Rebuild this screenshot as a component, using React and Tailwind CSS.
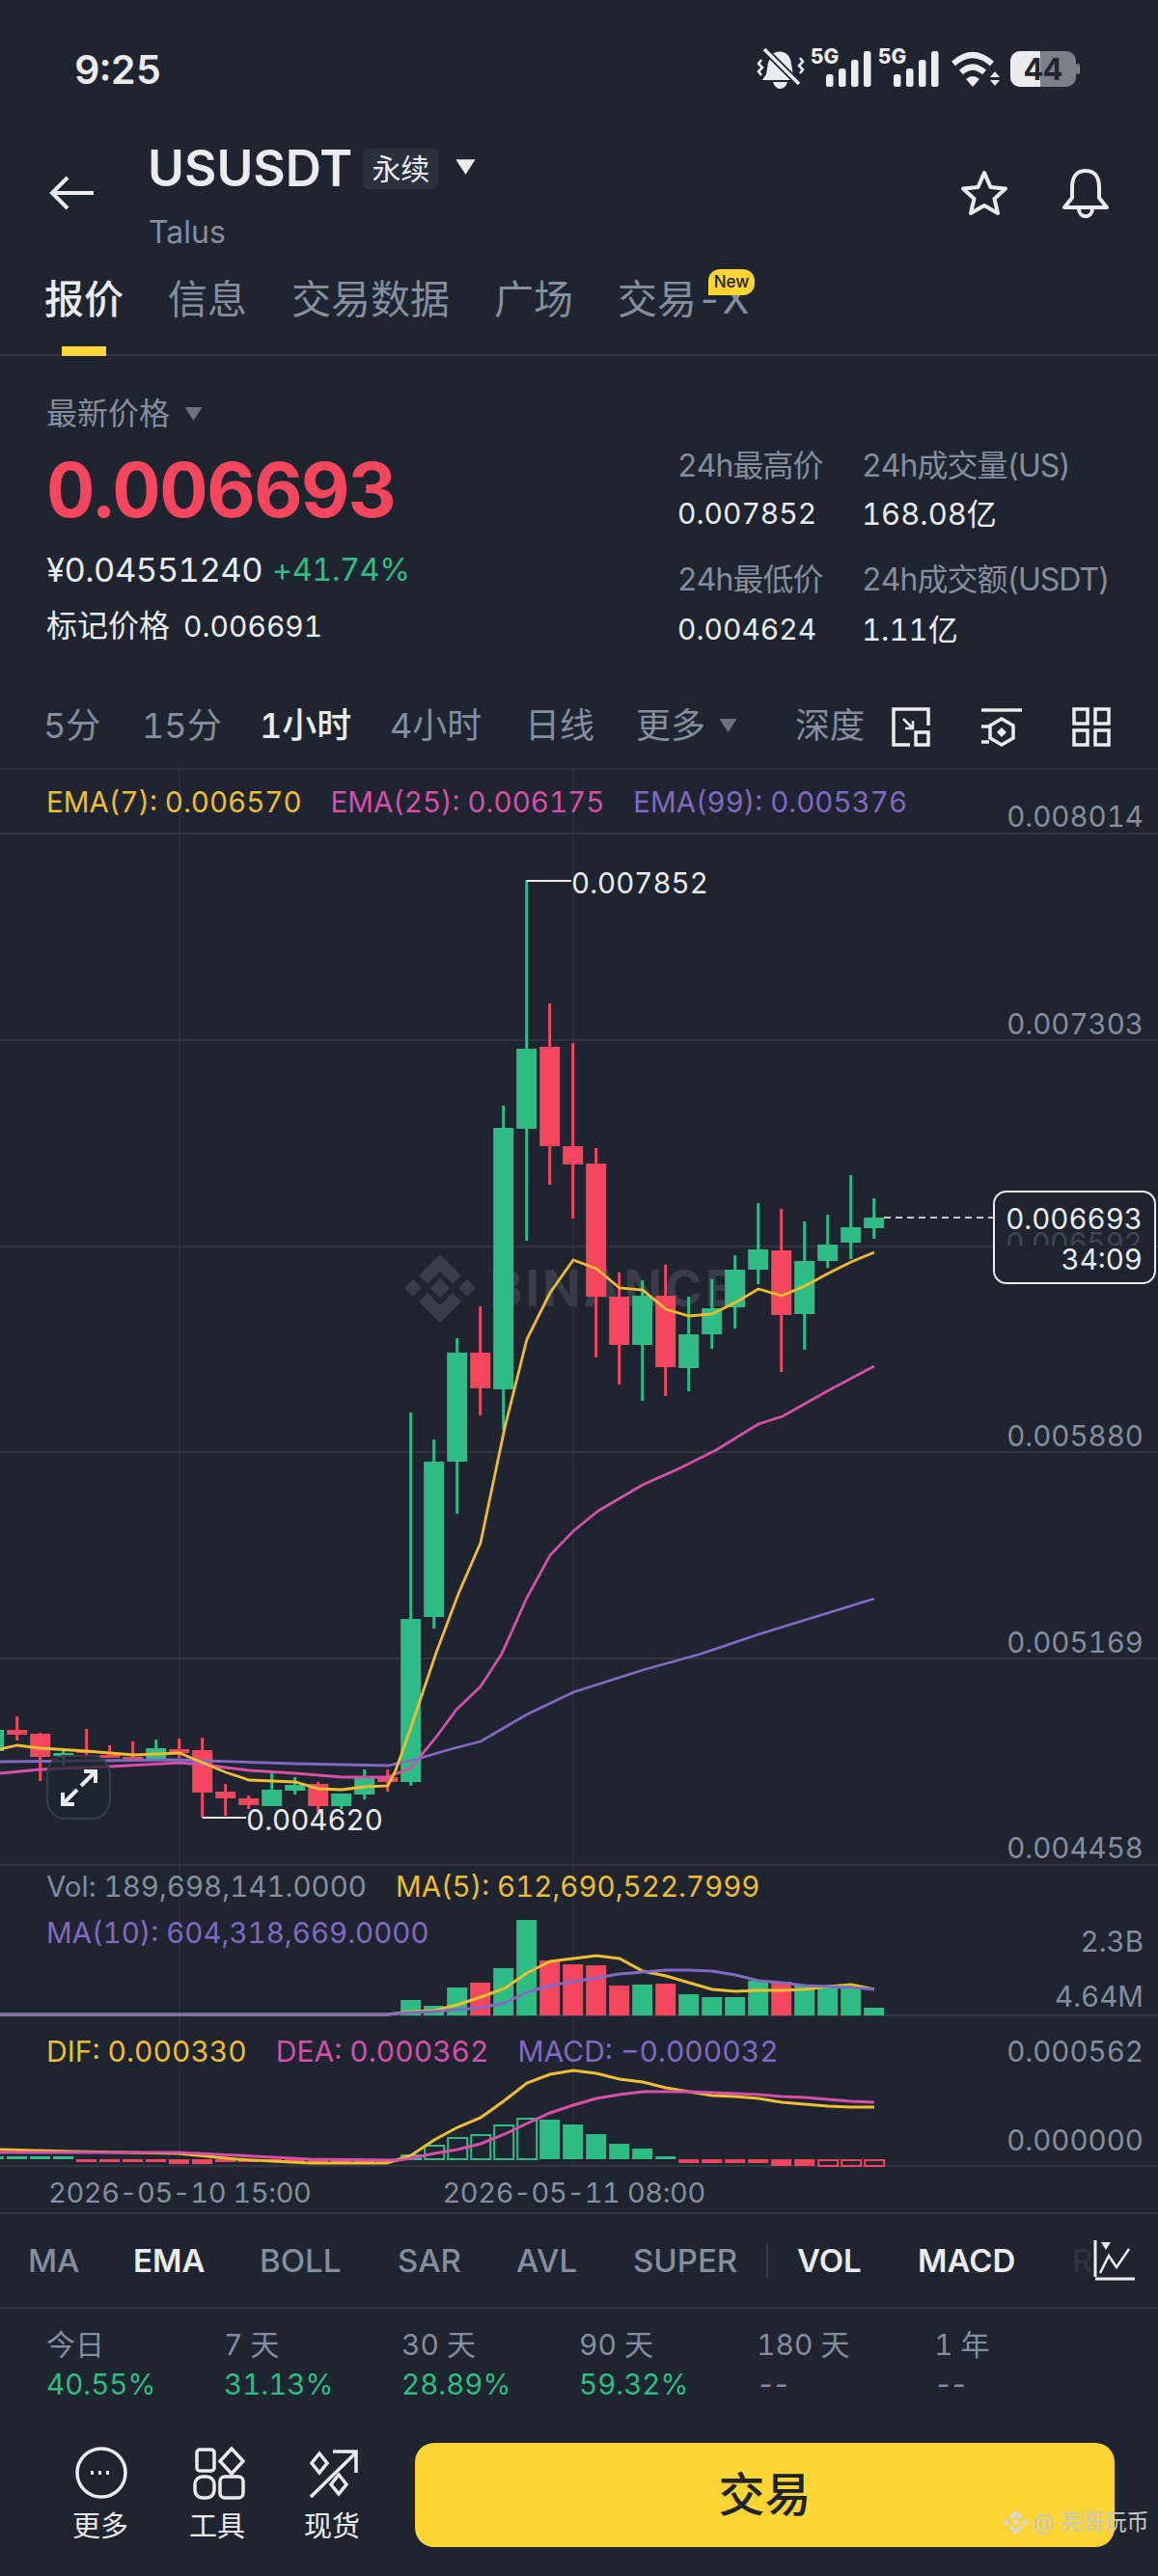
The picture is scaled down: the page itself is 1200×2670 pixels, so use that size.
import React from 'react';

const GREEN = '#2ebd85';
const RED = '#f6465d';
const YELLOW = '#f0bd2e';
const PINK = '#d64fa8';
const PURPLE = '#8269c2';

// x index, body top, body bottom, wick top, wick bottom, up?
const candles = [
  [0, 1793, 1815, 1790, 1815, 1],
  [1, 1793, 1798, 1779, 1804, 0],
  [2, 1797, 1821, 1796, 1846, 0],
  [3, 1817, 1820, 1815, 1830, 1],
  [4, 1815, 1817, 1792, 1822, 0],
  [5, 1819, 1822, 1809, 1822, 0],
  [6, 1821, 1823, 1805, 1823, 0],
  [7, 1812, 1823, 1803, 1823, 1],
  [8, 1813, 1817, 1802, 1822, 0],
  [9, 1814, 1858, 1801, 1884, 0],
  [10, 1857, 1864, 1849, 1882, 0],
  [11, 1864, 1871, 1861, 1875, 0],
  [12, 1855, 1872, 1838, 1872, 1],
  [13, 1850, 1856, 1842, 1860, 1],
  [14, 1849, 1872, 1847, 1878, 0],
  [15, 1859, 1872, 1859, 1875, 1],
  [16, 1843, 1860, 1834, 1865, 1],
  [17, 1842, 1847, 1834, 1857, 0],
  [18, 1678, 1847, 1464, 1851, 1],
  [19, 1515, 1676, 1492, 1688, 1],
  [20, 1402, 1515, 1387, 1569, 1],
  [21, 1402, 1439, 1354, 1467, 0],
  [22, 1169, 1440, 1146, 1482, 1],
  [23, 1087, 1170, 912, 1286, 1],
  [24, 1085, 1188, 1040, 1228, 0],
  [25, 1188, 1207, 1081, 1263, 0],
  [26, 1206, 1344, 1190, 1407, 0],
  [27, 1344, 1394, 1319, 1435, 0],
  [28, 1343, 1394, 1327, 1452, 1],
  [29, 1343, 1417, 1311, 1447, 0],
  [30, 1383, 1418, 1344, 1442, 1],
  [31, 1356, 1383, 1326, 1398, 1],
  [32, 1316, 1355, 1301, 1377, 1],
  [33, 1295, 1316, 1247, 1331, 1],
  [34, 1296, 1363, 1253, 1422, 0],
  [35, 1307, 1362, 1266, 1399, 1],
  [36, 1290, 1307, 1259, 1314, 1],
  [37, 1272, 1288, 1218, 1305, 1],
  [38, 1262, 1273, 1242, 1284, 1],
];

const ema7 = '0,1813 18,1809 42,1812 90,1815 138,1819 186,1817 210,1827 234,1837 258,1845 306,1847 330,1854 354,1855 378,1852 402,1851 410,1835 426,1790 452,1713 475,1652 498,1599 523,1480 546,1388 570,1340 594,1306 618,1315 642,1335 666,1337 690,1357 714,1364 738,1362 762,1350 786,1336 810,1343 834,1333 858,1320 882,1308 906,1298';
const ema25 = '0,1838 42,1834 114,1831 186,1827 210,1829 258,1835 306,1838 354,1842 402,1842 426,1832 450,1803 473,1772 498,1748 520,1714 546,1656 570,1612 594,1587 620,1566 666,1539 704,1522 742,1503 786,1476 811,1468 857,1442 906,1416';
const ema99 = '0,1826 186,1824 210,1825 306,1828 402,1830 433,1823 467,1813 498,1805 546,1777 594,1754 666,1731 727,1714 786,1694 906,1657';
const ma5 = '0,2088 401,2088 426,2085 450,2084 474,2078 498,2070 523,2061 546,2045 570,2033 594,2030 618,2027 642,2030 666,2043 690,2048 714,2055 738,2062 762,2064 786,2063 810,2063 834,2062 858,2059 882,2057 906,2062';
const ma10 = '0,2088 401,2088 426,2086 450,2085 474,2083 498,2081 523,2076 546,2065 570,2058 594,2054 618,2050 642,2046 666,2044 690,2042 714,2042 738,2043 762,2047 786,2053 810,2055 834,2058 858,2059 882,2060 906,2062';
const dif = '0,2228 76,2230 184,2232 245,2238 321,2242 401,2242 426,2234 450,2218 474,2205 498,2195 523,2177 546,2159 570,2150 594,2146 618,2149 642,2155 666,2158 690,2164 714,2168 738,2172 762,2173 786,2175 810,2179 834,2181 858,2183 882,2184 906,2184';
const dea = '0,2231 184,2231 245,2234 321,2238 413,2239 426,2237 450,2232 474,2228 498,2222 523,2212 546,2201 570,2190 594,2182 618,2175 642,2171 666,2168 690,2168 714,2168 738,2169 762,2170 786,2171 810,2173 834,2174 858,2176 882,2178 906,2179';

// volume bars from x=425.7: top y, up?
const volumes = [
  [2073, 1], [2079, 1], [2060, 1], [2055, 0], [2040, 1], [1990, 1], [2032, 0], [2036, 0], [2037, 0], [2058, 0], [2057, 1],
  [2056, 0], [2067, 1], [2070, 1], [2070, 1], [2053, 1], [2054, 0], [2058, 1], [2060, 1], [2060, 1], [2081, 1],
];

// macd bars from x=425.7: top, bottom, color, hollow
const macd = [
  [2233, 2238, GREEN, 1], [2223, 2238, GREEN, 1], [2215, 2238, GREEN, 1], [2212, 2238, GREEN, 1], [2202, 2238, GREEN, 1], [2195, 2238, GREEN, 1],
  [2197, 2238, GREEN, 0], [2202, 2238, GREEN, 0], [2212, 2238, GREEN, 0], [2222, 2238, GREEN, 0], [2227, 2238, GREEN, 0], [2235, 2238, GREEN, 0],
  [2238, 2242, RED, 0], [2238, 2242, RED, 0], [2238, 2242, RED, 0], [2238, 2242, RED, 0], [2238, 2245, RED, 0], [2238, 2245, RED, 0],
  [2238, 2245, RED, 1], [2238, 2245, RED, 1], [2238, 2245, RED, 1],
];

// small histogram left of the rally
const macdLeft = [
  [0, 2235, 2238, GREEN], [1, 2235, 2238, GREEN], [2, 2235, 2238, GREEN], [3, 2235, 2238, GREEN],
  [4, 2238, 2241, RED], [5, 2238, 2241, RED], [6, 2238, 2241, RED], [7, 2238, 2241, RED], [8, 2238, 2243, RED], [9, 2238, 2243, RED],
  [10, 2238, 2241, RED], [11, 2238, 2241, RED], [12, 2238, 2241, RED], [13, 2238, 2241, RED], [14, 2238, 2242, RED], [15, 2238, 2242, RED],
  [16, 2238, 2241, RED], [17, 2238, 2241, RED],
];

const axisLabels = [
  ['0.008014', 857], ['0.007303', 1072], ['0.005880', 1499], ['0.005169', 1713], ['0.004458', 1926],
  ['2.3B', 2023], ['4.64M', 2080], ['0.000562', 2137], ['0.000000', 2229],
];

const gridLines = [864, 1078, 1292, 1505, 1719];
const paneLines = [1933, 2089, 2245];

const returnsData = [
  ['今日', '40.55%'], ['7 天', '31.13%'], ['30 天', '28.89%'], ['90 天', '59.32%'], ['180 天', '--'], ['1 年', '--'],
];

function Triangle({ className }) {
  return (
    <svg viewBox="0 0 20 16" className={className}>
      <path d="M1 1 H19 L10 15 Z" fill="currentColor" />
    </svg>
  );
}

function StatusIcons() {
  const bars = [[0, 77], [13, 71], [26, 62], [39, 53]];
  return (
    <svg viewBox="780 45 345 50" className="w-[345px] h-[50px]">
      {/* muted bell */}
      <path d="M800 56 c11 -6 19 0 20 10 l2 12 5 5 h-37 l4 -6 2 -12 z" fill="#eaecef" />
      <path d="M801 85 h15 q-2 7 -7.5 7 t-7.5 -7 z" fill="#eaecef" />
      <path d="M792 51 L828 87" stroke="#1e2530" strokeWidth="7" />
      <path d="M792 51 L828 87" stroke="#eaecef" strokeWidth="3.5" />
      <path d="M789 62 l-3 4 4 4 -4 4 3 4 M829 60 l3 4 -4 4 4 4 -3 4" stroke="#eaecef" strokeWidth="2.5" fill="none" />
      {[840, 910].map((x, n) => (
        <g key={x}>
          <text x={x} y="66" fontSize="21" fontWeight="800" fill="#eaecef" fontFamily="Inter, sans-serif">5G</text>
          {bars.map(([dx, top]) => (
            <rect key={dx} x={(n ? 926 : 856) + dx} y={top} width="7.5" height={90 - top} rx="2.5" fill="#eaecef" />
          ))}
        </g>
      ))}
      {/* wifi */}
      <path d="M988 66 Q1008 48 1028 66" stroke="#eaecef" strokeWidth="6" fill="none" />
      <path d="M996 75 Q1008 64 1020 75" stroke="#eaecef" strokeWidth="6" fill="none" />
      <path d="M1001 82 Q1008 76 1015 82 L1008 90 Z" fill="#eaecef" />
      <path d="M1026 80 h10 l-5 -6 z M1026 83 h10 l-5 6 z" fill="#eaecef" />
      {/* battery */}
      <rect x="1047" y="53" width="68" height="37" rx="10" fill="#7b808a" />
      <path d="M1057 53 H1078 V90 H1057 a10 10 0 0 1 -10 -10 V63 a10 10 0 0 1 10 -10 z" fill="#eaecef" />
      <rect x="1115" y="66" width="4" height="11" rx="2" fill="#7b808a" />
      <text x="1081" y="83" textAnchor="middle" fontSize="31" fontWeight="700" fill="#1e2530" fontFamily="Inter, sans-serif">44</text>
    </svg>
  );
}

function Chart() {
  return (
    <svg viewBox="0 798 1200 1495" className="absolute inset-0 w-[1200px] h-[1495px]">
      {gridLines.map((y) => <line key={y} x1="0" x2="1200" y1={y} y2={y} stroke="#2f3641" strokeWidth="2" />)}
      {paneLines.map((y) => <line key={y} x1="0" x2="1200" y1={y} y2={y} stroke="#2f3641" strokeWidth="2.5" />)}
      <line x1="186" x2="186" y1="798" y2="2245" stroke="#2b323c" strokeWidth="1.5" />
      <line x1="594" x2="594" y1="798" y2="2245" stroke="#2b323c" strokeWidth="1.5" />

      {/* watermark */}
      <g fill="#373e49">
        <path d="M456 1300 L478 1322 L469 1331 L456 1318 L443 1331 L434 1322 Z" />
        <path d="M456 1371 L478 1349 L469 1340 L456 1353 L443 1340 L434 1349 Z" />
        <path d="M456 1325 L466 1335 L456 1345 L446 1335 Z" />
        <path d="M428 1326 L437 1335 L428 1344 L419 1335 Z" />
        <path d="M484 1326 L493 1335 L484 1344 L475 1335 Z" />
        <text x="507" y="1354" fontSize="52" fontWeight="700" letterSpacing="3" fontFamily="Inter, sans-serif">BINANCE</text>
      </g>

      {candles.map(([i, top, bottom, wickTop, wickBottom, up]) => {
        const x = -6.3 + 24 * i;
        const color = up ? GREEN : RED;
        return (
          <g key={i} fill={color}>
            <rect x={x - 1.5} y={wickTop} width="3" height={wickBottom - wickTop} />
            <rect x={x - 10.5} y={top} width="21" height={bottom - top} />
          </g>
        );
      })}
      <polyline points={ema25} fill="none" stroke={PINK} strokeWidth="2.8" />
      <polyline points={ema99} fill="none" stroke={PURPLE} strokeWidth="2.8" />
      <polyline points={ema7} fill="none" stroke={YELLOW} strokeWidth="2.8" />

      {/* high / low markers */}
      <path d="M545.7 913 H592" stroke="#eaecef" strokeWidth="2" />
      <text x="592" y="926" fontSize="29.5" fill="#eaecef" fontFamily="Inter, sans-serif">0.007852</text>
      <path d="M209.7 1884 H255" stroke="#eaecef" strokeWidth="2" />
      <text x="255" y="1897" fontSize="29.5" fill="#eaecef" fontFamily="Inter, sans-serif">0.004620</text>

      {/* last price */}
      <line x1="916" x2="1029" y1="1262" y2="1262" stroke="#c4c8ce" strokeWidth="2" strokeDasharray="7 5" />

      {/* volume pane */}
      {volumes.map(([top, up], i) => (
        <rect key={i} x={415.2 + 24 * i} y={top} width="21" height={2089 - top} fill={up ? GREEN : RED} />
      ))}
      <polyline points={ma5} fill="none" stroke={YELLOW} strokeWidth="3" />
      <polyline points={ma10} fill="none" stroke={PURPLE} strokeWidth="3" />

      {/* macd pane */}
      {macdLeft.map(([i, top, bottom, color]) => (
        <rect key={i} x={-17 + 24 * i} y={top} width="21" height={bottom - top} fill={color} />
      ))}
      {macd.map(([top, bottom, color, hollow], i) => (
        hollow ? (
          <rect key={i} x={416.2 + 24 * i} y={top + 1} width="20" height={bottom - top - 1} fill="none" stroke={color} strokeWidth="2" />
        ) : (
          <rect key={i} x={415.2 + 24 * i} y={top} width="21" height={bottom - top} fill={color} />
        )
      ))}
      <polyline points={dif} fill="none" stroke={YELLOW} strokeWidth="3" />
      <polyline points={dea} fill="none" stroke={PINK} strokeWidth="3" />

      {axisLabels.map(([label, y]) => (
        <text key={label} x="1185" y={y} textAnchor="end" fontSize="29.5" fill="#848e9c" fontFamily="Inter, sans-serif">{label}</text>
      ))}
    </svg>
  );
}

function App() {
  const font = "font-[Inter,'Noto_Sans_CJK_SC',sans-serif]";
  return (
    <div className={`w-[1200px] h-[2670px] bg-[#1e2530] overflow-hidden text-[#eaecef] tabular-nums ${font}`}>
      {/* Status bar */}
      <div className="h-[105px] flex items-start justify-between">
        <span className="ml-[77px] mt-[49px] text-[41px] leading-[46px] font-semibold">9:25</span>
        <div className="mt-[45px] mr-[75px]"><StatusIcons /></div>
      </div>

      {/* Header */}
      <div className="h-[165px] flex items-start">
        <svg viewBox="0 0 48 36" className="w-[48px] h-[36px] ml-[51px] mt-[77px]">
          <path d="M46 18 H3 M19 2 L3 18 L19 34" fill="none" stroke="#eaecef" strokeWidth="4" />
        </svg>
        <div className="ml-[54px]">
          <div className="flex items-center h-[72px] mt-[34px]">
            <span className="text-[51.5px] leading-none font-semibold">USUSDT</span>
            <span className="ml-[11px] w-[78px] h-[42px] flex items-center justify-center rounded-md bg-[#2a313c] text-[30px] leading-none">永续</span>
            <Triangle className="w-[27px] h-[18px] ml-[15px] mb-[4px] text-[#eaecef]" />
          </div>
          <div className="text-[32px] leading-none text-[#848e9c] mt-[14px] ml-[1px]">Talus</div>
        </div>
        <div className="ml-auto mr-[50px] mt-[69px] flex items-center gap-[55px]">
          <svg viewBox="0 0 50 48" className="w-[50px] h-[48px]">
            <path d="M25 3 L31.5 18 L47 19.5 L35.5 30 L39 45 L25 37 L11 45 L14.5 30 L3 19.5 L18.5 18 Z" fill="none" stroke="#eaecef" strokeWidth="4" strokeLinejoin="round" />
          </svg>
          <svg viewBox="0 0 50 52" className="w-[50px] h-[52px]">
            <path d="M25 3 C14 3 11 12 11 20 V31 L3 41 H47 L39 31 V20 C39 12 36 3 25 3 Z M18 42 C18 53 32 53 32 42" fill="none" stroke="#eaecef" strokeWidth="4" strokeLinejoin="round" />
          </svg>
        </div>
      </div>

      {/* Tabs */}
      <div className="h-[99px] border-b-2 border-[#333a45] pl-[46px] flex gap-[46px] text-[41px] leading-none text-[#848e9c] relative">
        <span className="relative mt-[20px] text-[#eaecef] font-medium">报价
          <span className="absolute left-[18px] top-[69px] w-[46px] h-[10px] bg-[#fcd535]" />
        </span>
        <span className="mt-[20px]">信息</span>
        <span className="mt-[20px]">交易数据</span>
        <span className="mt-[20px]">广场</span>
        <span className="relative mt-[20px]">交易-X
          <span className="absolute left-[94px] -top-[11px] w-[48px] h-[27px] rounded-[12px] rounded-bl-none bg-[#fcd535] text-[#1e2329] text-[17px] leading-[27px] text-center font-medium">New</span>
        </span>
      </div>

      {/* Price info */}
      <div className="h-[330px] flex">
        <div className="w-[702px] pl-[48px]">
          <div className="flex items-center mt-[44px] text-[#848e9c]">
            <span className="text-[32px] leading-none">最新价格</span>
            <Triangle className="w-[23px] h-[16px] ml-[13px] text-[#6b7380]" />
          </div>
          <div className="text-[#f6465d] text-[78px] leading-none font-bold mt-[24px] tracking-[-1.5px]">0.006693</div>
          <div className="flex items-center mt-[26px] h-[36px] whitespace-nowrap">
            <span className="text-[34.5px] leading-none tracking-[-0.5px]">¥0.04551240</span>
            <span className="ml-[10px] text-[32.5px] leading-none text-[#2ebd85] tracking-[-0.5px]">+41.74%</span>
          </div>
          <div className="flex items-center mt-[24px]">
            <span className="text-[32px] leading-none">标记价格</span>
            <span className="text-[30px] leading-none ml-[14px]">0.006691</span>
          </div>
        </div>
        <div className="flex gap-[49px] pt-[98px] whitespace-nowrap">
          <div className="w-[142px]">
            <div className="text-[32px] leading-none text-[#848e9c] tracking-[-1px]">24h最高价</div>
            <div className="text-[30px] leading-none mt-[18px]">0.007852</div>
            <div className="text-[32px] leading-none text-[#848e9c] tracking-[-1px] mt-[38px]">24h最低价</div>
            <div className="text-[30px] leading-none mt-[20px]">0.004624</div>
          </div>
          <div>
            <div className="text-[32px] leading-none text-[#848e9c] tracking-[-1px]">24h成交量(US)</div>
            <div className="text-[31px] leading-none mt-[18px]">168.08亿</div>
            <div className="text-[32px] leading-none text-[#848e9c] tracking-[-1px] mt-[37px]">24h成交额(USDT)</div>
            <div className="text-[31px] leading-none mt-[20px]">1.11亿</div>
          </div>
        </div>
      </div>

      {/* Intervals */}
      <div className="h-[99px] border-b-2 border-[#2b323c] flex items-center pl-[45px] text-[36px] leading-none text-[#848e9c] pt-[8px] relative">
        <span className="w-[102px]">5分</span>
        <span className="w-[122px]">15分</span>
        <span className="w-[135px] text-[#eaecef] font-medium">1小时</span>
        <span className="w-[140px]">4小时</span>
        <span className="w-[115px]">日线</span>
        <span>更多</span>
        <Triangle className="w-[23px] h-[16px] ml-[12px] text-[#6b7380]" />
        <span className="ml-[58px]">深度</span>
        <svg viewBox="925 730 230 46" className="w-[230px] h-[46px] ml-[28px] mt-[2px]" fill="none" stroke="#eaecef" strokeWidth="3.5">
          <path d="M944 772 H927 V735 H963 V752" />
          <rect x="950" y="759" width="13" height="13" />
          <path d="M937 745 L947 755 M947 747 V755 H939" strokeWidth="2.5" />
          <path d="M1018 736 H1060 M1018 753 H1026 M1018 769 H1026" />
          <path d="M1039 745 L1051 752 V765 L1039 772 L1027 765 V752 Z" />
          <path d="M1039 754 L1044 759 L1039 764 L1034 759 Z" fill="#eaecef" stroke="none" />
          <rect x="1114" y="735" width="14" height="15" />
          <rect x="1136" y="735" width="14" height="15" />
          <rect x="1114" y="757" width="14" height="15" />
          <rect x="1136" y="757" width="14" height="15" />
        </svg>
      </div>

      {/* Chart */}
      <div className="relative h-[1495px]">
        <Chart />
        <div className="relative flex gap-[30px] pl-[48px] pt-[15px] text-[29.5px] leading-[36px]">
          <span className="text-[#f0bd2e]">EMA(7): 0.006570</span>
          <span className="text-[#d64fa8]">EMA(25): 0.006175</span>
          <span className="text-[#8269c2]">EMA(99): 0.005376</span>
        </div>

        {/* Expand button */}
        <div className="absolute left-[48px] top-[1021px] w-[67px] h-[67px] rounded-[20px] border-[2.5px] border-[#363d48] bg-[#1e2530]/75 flex items-center justify-center">
          <svg viewBox="0 0 50 50" className="w-[50px] h-[50px]" fill="none" stroke="#eaecef" strokeWidth="4">
            <path d="M8 42 L23 27 M8 30 V42 H20 M42 8 L27 23 M30 8 H42 V20" />
          </svg>
        </div>

        {/* Last price box */}
        <div className="absolute left-[1029px] top-[436px] w-[169px] h-[97px] rounded-[14px] border-2 border-[#eaecef] bg-[#1e2530] text-[29.5px] leading-none text-right pr-[12px] pt-[13px] overflow-hidden">
          <div>0.006693</div>
          <div className="absolute right-[12px] top-[38px] text-[#3f4652]">0.006592</div>
          <div className="relative mt-[12px] bg-[#1e2530]">34:09</div>
        </div>

        <div className="absolute left-[48px] top-[1133px] w-[800px] text-[29.5px] leading-[48px]">
          <div className="flex gap-[30px]">
            <span className="text-[#848e9c]">Vol: 189,698,141.0000</span>
            <span className="text-[#f0bd2e]">MA(5): 612,690,522.7999</span>
          </div>
          <div className="text-[#8269c2]">MA(10): 604,318,669.0000</div>
        </div>

        <div className="absolute left-[48px] top-[1310px] flex gap-[30px] text-[30px] leading-[36px]">
          <span className="text-[#f0bd2e]">DIF: 0.000330</span>
          <span className="text-[#d64fa8]">DEA: 0.000362</span>
          <span className="text-[#8269c2]">MACD: −0.000032</span>
        </div>

        <div className="absolute left-[50px] top-[1457px] flex gap-[136px] text-[29px] leading-[36px] tracking-[-0.4px] text-[#848e9c]">
          <span>2026-05-10 15:00</span>
          <span>2026-05-11 08:00</span>
        </div>
      </div>

      {/* Indicators */}
      <div className="h-[100px] border-t-2 border-b-2 border-[#2f3641] flex items-center relative pl-[29px] text-[33px] leading-none text-[#848e9c] font-medium">
        <span className="w-[109px]">MA</span>
        <span className="w-[131px] text-[#eaecef] font-semibold">EMA</span>
        <span className="w-[143px]">BOLL</span>
        <span className="w-[123px]">SAR</span>
        <span className="w-[121px]">AVL</span>
        <span className="w-[138px]">SUPER</span>
        <span className="w-[2px] h-[36px] bg-[#333a45] mr-[30px]" />
        <span className="w-[125px] text-[#eaecef] font-semibold">VOL</span>
        <span className="w-[160px] text-[#eaecef] font-semibold">MACD</span>
        <span className="text-[#4a515d]">R</span>
        <div className="absolute right-0 top-0 bottom-0 w-[90px] bg-gradient-to-r from-[#1e2530]/60 to-[#1e2530] flex items-center">
          <svg viewBox="0 0 46 46" className="w-[46px] h-[46px] ml-[22px]" fill="none" stroke="#eaecef" strokeWidth="3">
            <path d="M3 2 V40 M3 42 H44" />
            <path d="M8 36 L17 18 L25 30 L38 11" strokeWidth="2.5" />
            <path d="M9 4 H19 L14 12 Z" fill="#eaecef" stroke="none" />
          </svg>
        </div>
      </div>

      {/* Returns */}
      <div className="h-[110px] pl-[48px] flex pt-[21px]">
        {returnsData.map(([label, value]) => (
          <div key={label} className="w-[184px] text-[#848e9c]">
            <div className="text-[30px] leading-[32px]">{label}</div>
            <div className={`text-[29.5px] leading-[32px] mt-[9px] ${value === '--' ? 'text-[#848e9c] tracking-[-3px]' : 'text-[#2ebd85]'}`}>{value}</div>
          </div>
        ))}
      </div>

      {/* Bottom bar */}
      <div className="relative flex items-start pt-[29px]">
        <div className="w-[430px] flex pl-[75px] text-[29px] leading-none pt-[3px]">
          <div className="w-[121px]">
            <svg viewBox="0 0 60 56" className="w-[60px] h-[56px]" fill="none" stroke="#eaecef" strokeWidth="3.5">
              <circle cx="30" cy="28" r="25" />
              <path d="M19 28 h3 M27 28 h3 M35 28 h3" strokeWidth="4" />
            </svg>
            <div className="mt-[13px]">更多</div>
          </div>
          <div className="w-[119px]">
            <svg viewBox="0 0 60 56" className="w-[60px] h-[56px]" fill="none" stroke="#eaecef" strokeWidth="3.5">
              <rect x="8" y="4" width="18" height="22" rx="3" />
              <path d="M44 3 L56 16 L44 29 L32 16 Z" />
              <rect x="6" y="32" width="20" height="22" rx="8" />
              <rect x="32" y="32" width="24" height="22" rx="5" />
            </svg>
            <div className="mt-[13px]">工具</div>
          </div>
          <div>
            <svg viewBox="0 0 60 56" className="w-[60px] h-[56px]" fill="none" stroke="#eaecef" strokeWidth="3.5">
              <path d="M7 53 L53 8 M30 6 H54 V28" />
              <path d="M16 8 L24 18 L16 28 L8 18 Z" />
              <path d="M36 30 L44 40 L36 50 L28 40 Z" />
            </svg>
            <div className="mt-[13px]">现货</div>
          </div>
        </div>
        <div className="w-[725px] h-[108px] rounded-[20px] bg-[#fcd535] text-[#1e2329] text-[48px] flex items-center justify-center font-medium">交易</div>
        <div className="absolute left-[1039px] top-[97px] flex items-center text-[23px] leading-none text-[#c4c7cc] whitespace-nowrap">
          <svg viewBox="0 0 30 30" className="w-[27px] h-[29px]" fill="#d5d8dc">
            <path d="M15 1 L23 9 L20 12 L15 7 L10 12 L7 9 Z M15 29 L23 21 L20 18 L15 23 L10 18 L7 21 Z M15 11 L19 15 L15 19 L11 15 Z M4 11 L8 15 L4 19 L0 15 Z M26 11 L30 15 L26 19 L22 15 Z" />
          </svg>
          <span className="ml-[4px]">@ 亮哥玩币</span>
        </div>
      </div>
    </div>
  );
}

export default App;
